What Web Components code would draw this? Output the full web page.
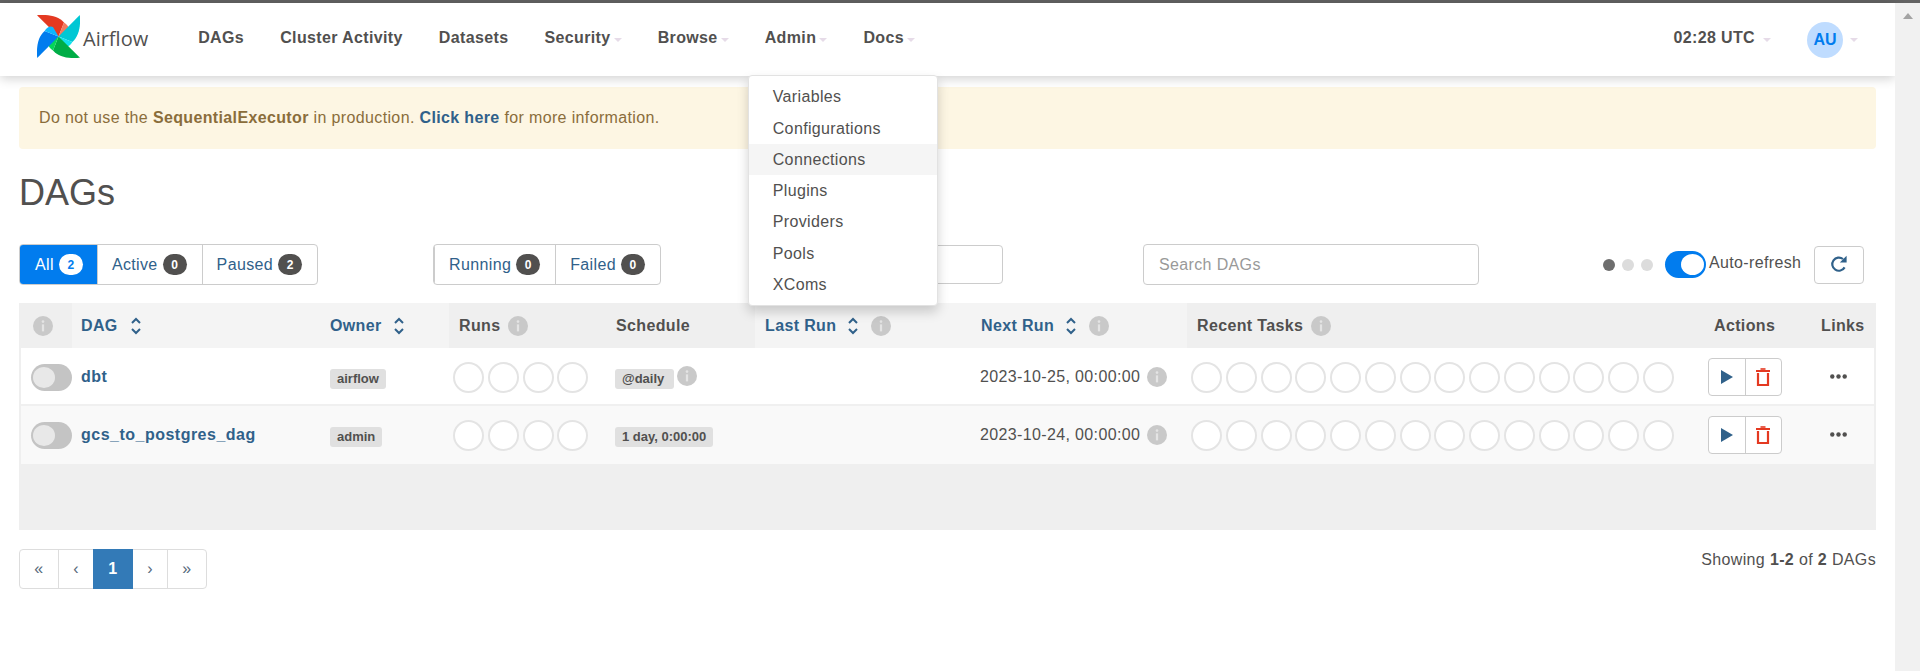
<!DOCTYPE html>
<html>
<head>
<meta charset="utf-8">
<title>DAGs - Airflow</title>
<style>
    html, body { margin: 0; height: 100%; overflow: hidden; background: #fff; }
    body { font: 16px "Liberation Sans", Arial, sans-serif; color: #51504f; letter-spacing: .36px; }
    b { font-weight: bold; }
</style>
</head>
<body>
<af-app>
    <af-navbar slot="nav">
        <af-logo slot="brand"></af-logo>
        <af-nav-item>DAGs</af-nav-item>
        <af-nav-item>Cluster Activity</af-nav-item>
        <af-nav-item>Datasets</af-nav-item>
        <af-nav-item caret>Security</af-nav-item>
        <af-nav-item caret>Browse</af-nav-item>
        <af-nav-item caret>
            Admin
            <af-menu slot="menu">
                <af-menu-item>Variables</af-menu-item>
                <af-menu-item>Configurations</af-menu-item>
                <af-menu-item hover>Connections</af-menu-item>
                <af-menu-item>Plugins</af-menu-item>
                <af-menu-item>Providers</af-menu-item>
                <af-menu-item>Pools</af-menu-item>
                <af-menu-item>XComs</af-menu-item>
            </af-menu>
        </af-nav-item>
        <af-nav-item caret>Docs</af-nav-item>
        <af-user slot="right" time="02:28 UTC" initials="AU"></af-user>
    </af-navbar>

    <af-alert>Do not use the <b>SequentialExecutor</b> in production. <a href="#" style="color:#30618a;font-weight:bold;text-decoration:none">Click here</a> for more information.</af-alert>
    <af-title>DAGs</af-title>
    <af-toolbar></af-toolbar>

    <dag-table>
        <dag-row name="dbt" owner="airflow" schedule="@daily" sched-info next="2023-10-25, 00:00:00"></dag-row>
        <dag-row name="gcs_to_postgres_dag" owner="admin" schedule="1 day, 0:00:00" next="2023-10-24, 00:00:00" odd></dag-row>
    </dag-table>

    <af-pager></af-pager>
</af-app>

<script>
const LINK = "#30618a";

class AfApp extends HTMLElement {
    constructor() {
        super();
        this.attachShadow({ mode: "open" });
        this.shadowRoot.innerHTML = `
            <style>
                :host { display: flex; flex-direction: column; height: 100vh; }
                .topline { height: 3px; background: #636363; flex: none; }
                .body { flex: 1; display: flex; min-height: 0; }
                .main { flex: 1; min-width: 0; }
                .content { padding: 0 19px; }
                .scroll { width: 25px; flex: none; background: #f1f1f1; display: flex; justify-content: center; z-index: 5; }
                .scroll i { margin-top: 10px; width: 0; height: 0; border: 5.5px solid transparent; border-top: 0; border-bottom: 6px solid #a3a3a3; }
            </style>
            <div class="topline"></div>
            <div class="body">
                <div class="main">
                    <slot name="nav"></slot>
                    <div class="content"><slot></slot></div>
                </div>
                <div class="scroll"><i></i></div>
            </div>
        `;
    }
}

class AfNavbar extends HTMLElement {
    constructor() {
        super();
        this.attachShadow({ mode: "open" });
        this.shadowRoot.innerHTML = `
            <style>
                :host {
                    display: flex; align-items: stretch; height: 73px; padding: 0 37px;
                    background: #fff; box-shadow: 0 2px 11px rgba(0,0,0,.2);
                    position: relative; z-index: 3;
                }
                .links { display: flex; gap: 36.1px; margin-left: 50px; }
                .right { margin-left: auto; display: flex; }
            </style>
            <slot name="brand"></slot>
            <div class="links"><slot></slot></div>
            <div class="right"><slot name="right"></slot></div>
        `;
    }
}

class AfLogo extends HTMLElement {
    constructor() {
        super();
        this.attachShadow({ mode: "open" });
        // one blade, turned four times round the centre
        const blade = (turn, dark, light) => `
            <g transform="rotate(${turn} 21.5 21.5)">
                <path d="M0 .2C10-.8 21 .6 27 7.6L21.5 21.5Z" fill="${dark}"/>
                <path d="M27 7.6C31 10 32.4 13 31 16L21.5 21.5Z" fill="${light}"/>
            </g>`;
        this.shadowRoot.innerHTML = `
            <style>
                :host { display: flex; align-items: center; height: 100%; letter-spacing: 0; }
                svg { display: block; margin-top: -6px; }
                span { font: 20px "Open Sans", sans-serif; color: #51504f; margin: -3px 0 0 3px; }
            </style>
            <svg width="43" height="43" viewBox="0 0 43 43">
                ${blade(0, "#e43921", "#f37a5f")}
                ${blade(90, "#00c7d4", "#11e1ee")}
                ${blade(180, "#00ad46", "#04d659")}
                ${blade(270, "#017cee", "#0cb6ff")}
            </svg>
            <span>Airflow</span>
        `;
    }
}

const CARET = `display: inline-block; width: 0; height: 0; border-left: 4px solid transparent; border-right: 4px solid transparent; border-top: 4px solid #e6dbe8;`;

class AfNavItem extends HTMLElement {
    constructor() {
        super();
        this.attachShadow({ mode: "open" });
        this.shadowRoot.innerHTML = `
            <style>
                :host { display: flex; align-items: center; height: 100%; position: relative; font-weight: bold; white-space: nowrap; padding-bottom: 3px; box-sizing: border-box; }
                .caret { ${CARET} margin: 3px 0 0 3px; }
                :host(:not([caret])) .caret { display: none; }
            </style>
            <slot></slot><span class="caret"></span><slot name="menu"></slot>
        `;
    }
}

class AfMenu extends HTMLElement {
    constructor() {
        super();
        this.attachShadow({ mode: "open" });
        this.shadowRoot.innerHTML = `
            <style>
                :host {
                    display: block; position: absolute; left: -17px; top: 72px; width: 190px; box-sizing: border-box;
                    padding: 5.4px 0 5px; background: #fff; border: 1px solid #e2e2e2; border-radius: 4px;
                    box-shadow: 0 6px 12px rgba(0,0,0,.175); font-weight: normal; z-index: 10;
                }
            </style>
            <slot></slot>
        `;
    }
}

class AfMenuItem extends HTMLElement {
    constructor() {
        super();
        this.attachShadow({ mode: "open" });
        this.shadowRoot.innerHTML = `
            <style>
                :host { display: block; height: 31.25px; line-height: 31.25px; padding-left: 24px; }
                :host([hover]) { background: #f5f5f5; }
            </style>
            <slot></slot>
        `;
    }
}

class AfUser extends HTMLElement {
    constructor() {
        super();
        this.attachShadow({ mode: "open" });
        this.shadowRoot.innerHTML = `
            <style>
                :host { display: flex; align-items: center; height: 100%; font-weight: bold; padding-bottom: 3px; box-sizing: border-box; }
                .caret { ${CARET} margin-top: 3px; }
                .time { margin-right: 8px; }
                .avatar {
                    width: 36px; height: 36px; border-radius: 50%; background: #bfdcff; color: #017cee; letter-spacing: 0;
                    display: flex; align-items: center; justify-content: center; margin: 3px 7px 0 36px;
                }
            </style>
            <span class="time">${this.getAttribute("time")}</span><span class="caret"></span>
            <span class="avatar">${this.getAttribute("initials")}</span><span class="caret"></span>
        `;
    }
}

class AfAlert extends HTMLElement {
    constructor() {
        super();
        this.attachShadow({ mode: "open" });
        this.shadowRoot.innerHTML = `
            <style>
                :host {
                    display: block; margin-top: 11px; height: 62px; line-height: 61px; padding-left: 20px; box-sizing: border-box;
                    background: #fdf6e3; border-radius: 4px; color: #8a6d3b;
                }
            </style>
            <slot></slot>
        `;
    }
}

class AfTitle extends HTMLElement {
    constructor() {
        super();
        this.attachShadow({ mode: "open" });
        this.shadowRoot.innerHTML = `
            <style>
                :host { display: block; margin-top: 24px; font-size: 36px; line-height: 40px; color: #51504f; letter-spacing: 0; }
            </style>
            <slot></slot>
        `;
    }
}

class AfCount extends HTMLElement {
    constructor() {
        super();
        this.attachShadow({ mode: "open" });
        this.shadowRoot.innerHTML = `
            <style>
                :host {
                    display: inline-flex; align-items: center; justify-content: center; width: 24px; height: 21px; border-radius: 11px;
                    background: #51504f; color: #fff; font: bold 12px "Liberation Sans", sans-serif; letter-spacing: 0;
                }
                :host([light]) { background: #fff; color: #017cee; }
            </style>
            <slot></slot>
        `;
    }
}

class AfFilterGroup extends HTMLElement {
    constructor() {
        super();
        this.attachShadow({ mode: "open" });
        const items = JSON.parse(this.getAttribute("items"));
        this.shadowRoot.innerHTML = `
            <style>
                :host { display: flex; height: 41px; box-sizing: border-box; border: 1px solid #ccc; border-radius: 4px; overflow: hidden; color: ${LINK}; }
                .it { display: flex; align-items: center; gap: 5px; padding: 0 15px 0 14px; border-left: 1px solid #ccc; }
                .it:first-child { border-left: 0; }
                .it.on { background: #017cee; color: #fff; margin: -1px 0 -1px -1px; padding: 0 14px 0 15px; }
            </style>
            ${items.map(i => `<div class="it ${i.on ? "on" : ""}">${i.label}<af-count ${i.on ? "light" : ""}>${i.n}</af-count></div>`).join("")}
        `;
    }
}

class AfSwitch extends HTMLElement {
    constructor() {
        super();
        this.attachShadow({ mode: "open" });
        this.shadowRoot.innerHTML = `
            <style>
                :host { display: block; width: 41px; height: 27px; border-radius: 14px; background: #c4c4c4; position: relative; flex: none; }
                :host([on]) { background: #017cee; }
                i { position: absolute; left: 2px; top: 3px; width: 22px; height: 21px; border-radius: 50%; background: #e8e8e8; }
                :host([on]) i { left: 16px; background: #fff; width: 23px; }
            </style>
            <i></i>
        `;
    }
}

class AfInfo extends HTMLElement {
    constructor() {
        super();
        this.attachShadow({ mode: "open" });
        this.shadowRoot.innerHTML = `
            <style>
                :host { display: block; width: 20px; height: 20px; flex: none; }
                svg { display: block; }
            </style>
            <svg width="20" height="20" viewBox="0 0 20 20">
                <circle cx="10" cy="10" r="10" fill="#c9c9c9"/>
                <circle cx="10" cy="5.6" r="1.3" fill="#e4e4e4"/>
                <rect x="8.9" y="8.4" width="2.2" height="7" fill="#e4e4e4"/>
            </svg>
        `;
    }
}

class AfSort extends HTMLElement {
    constructor() {
        super();
        this.attachShadow({ mode: "open" });
        this.shadowRoot.innerHTML = `
            <style>
                :host { display: block; width: 10px; height: 18px; flex: none; }
                svg { display: block; }
            </style>
            <svg width="10" height="18" viewBox="0 0 10 18" fill="none" stroke="${LINK}" stroke-width="2">
                <path d="M1 6l4-4 4 4"/>
                <path d="M1 12l4 4 4-4"/>
            </svg>
        `;
    }
}

class AfToolbar extends HTMLElement {
    constructor() {
        super();
        this.attachShadow({ mode: "open" });
        this.shadowRoot.innerHTML = `
            <style>
                :host { display: flex; align-items: center; margin-top: 31px; height: 41px; padding-right: 12px; }
                .box { box-sizing: border-box; border: 1px solid #ccc; border-radius: 4px; background: #fff; }
                .tags { width: 243px; height: 39px; margin-left: auto; }
                .search { width: 336px; height: 41px; margin-left: 140px; padding-left: 15px; display: flex; align-items: center; color: #999; }
                .dots { display: flex; gap: 7px; margin-left: 124px; }
                .dots i { width: 12px; height: 12px; border-radius: 50%; background: #dcdcdc; }
                .dots i:first-child { background: #6e6e6e; }
                af-switch { margin-left: 12px; }
                .lbl { margin-left: 3px; margin-top: -3px; width: 93px; white-space: nowrap; }
                .refresh { width: 50px; height: 38px; margin-left: 12px; display: flex; align-items: center; justify-content: center; }
                svg { display: block; margin-top: -1px; }
            </style>
            <af-filter-group items='[{"label":"All","n":2,"on":true},{"label":"Active","n":0},{"label":"Paused","n":2}]'></af-filter-group>
            <af-filter-group style="margin-left:115px" items='[{"label":"Running","n":0},{"label":"Failed","n":0}]'></af-filter-group>
            <div class="box tags"></div>
            <div class="box search">Search DAGs</div>
            <div class="dots"><i></i><i></i><i></i></div>
            <af-switch on></af-switch>
            <span class="lbl">Auto-refresh</span>
            <div class="box refresh">
                <svg width="18" height="18" viewBox="0 0 18 18">
                    <path d="M14.6 12.4A6.6 6.6 0 1 1 13 4" fill="none" stroke="${LINK}" stroke-width="2.2"/>
                    <path d="M16.6 .8V7.6H9.8Z" fill="${LINK}"/>
                </svg>
            </div>
        `;
    }
}

const COLS = "53px 248px 129px 157px 149px 216px 216px 517px 107px 65px";

class DagTable extends HTMLElement {
    constructor() {
        super();
        this.attachShadow({ mode: "open" });
        const sortable = (label, info) => `<div class="th lite link">${label}<af-sort style="margin-left:12px"></af-sort>${info ? `<af-info style="margin-left:13px"></af-info>` : ""}</div>`;
        this.shadowRoot.innerHTML = `
            <style>
                :host { display: block; margin-top: 18px; height: 227px; background: #efefef; }
                .head { display: grid; grid-template-columns: ${COLS}; height: 45px; font-weight: bold; }
                .th { display: flex; align-items: center; padding-left: 10px; background: #efefef; white-space: nowrap; }
                .th.lite { background: #f4f4f4; }
                .th.link { color: ${LINK}; }
                .th af-info.plain { margin-left: 8px; }
                .th.first { padding-left: 14px; }
                .th.dag { padding-left: 9px; }
                .rows { padding: 0 2px; }
            </style>
            <div class="head">
                <div class="th first"><af-info></af-info></div>
                <div class="th lite link dag">DAG<af-sort style="margin-left:13px"></af-sort></div>
                ${sortable("Owner")}
                <div class="th">Runs<af-info class="plain"></af-info></div>
                <div class="th">Schedule</div>
                ${sortable("Last Run", true)}
                ${sortable("Next Run", true)}
                <div class="th">Recent Tasks<af-info class="plain"></af-info></div>
                <div class="th">Actions</div>
                <div class="th">Links</div>
            </div>
            <div class="rows"><slot></slot></div>
        `;
    }
}

class DagRow extends HTMLElement {
    constructor() {
        super();
        this.attachShadow({ mode: "open" });
        const attr = n => this.getAttribute(n);
        const circles = n => `<div class="circles">${"<i></i>".repeat(n)}</div>`;
        const hasInfo = this.hasAttribute("sched-info");
        this.shadowRoot.innerHTML = `
            <style>
                :host {
                    display: grid; grid-template-columns: 51px 248px 129px 157px 149px 216px 216px 517px 107px 63px;
                    height: 58px; align-items: center;
                    background: #fff; box-shadow: inset 0 -2px #f0f0f0;
                }
                :host([odd]) { background: #f9f9f9; box-shadow: none; }
                .c { display: flex; align-items: center; padding-left: 9px; white-space: nowrap; }
                .c.toggle { padding-left: 10px; }
                .c.wide { padding-left: 4px; }
                .name { color: ${LINK}; font-weight: bold; margin-top: -1px; letter-spacing: .49px; }
                .label {
                    display: inline-block; height: 20px; line-height: 20px; padding: 0 7px; margin-top: 4px;
                    background: #e0e0e0; border-radius: 3px; font-size: 13px; font-weight: bold; letter-spacing: 0;
                }
                .circles { display: flex; gap: 3.75px; }
                .circles i { width: 31px; height: 31px; box-sizing: border-box; border: 2px solid #e4e4e4; border-radius: 50%; background: #fff; }
                .next { gap: 7px; }
                .acts { display: flex; width: 74px; height: 38px; box-sizing: border-box; border: 1px solid #ccc; border-radius: 4px; background: #fff; }
                .acts div { flex: 1; display: flex; align-items: center; justify-content: center; }
                .acts div + div { border-left: 1px solid #ccc; }
                svg { display: block; }
                .dots { padding-left: 19px; }
            </style>
            <div class="c toggle"><af-switch></af-switch></div>
            <div class="c"><span class="name">${attr("name")}</span></div>
            <div class="c" style="padding-left:10px"><span class="label">${attr("owner")}</span></div>
            <div class="c wide">${circles(4)}</div>
            <div class="c"><span class="label" ${hasInfo ? `style="padding-right:10px"` : ""}>${attr("schedule")}</span>${hasInfo ? `<af-info style="margin:-2px 0 0 3px"></af-info>` : ""}</div>
            <div class="c"></div>
            <div class="c next">${attr("next")}<af-info></af-info></div>
            <div class="c wide">${circles(14)}</div>
            <div class="c wide">
                <div class="acts">
                    <div><svg width="12" height="14" viewBox="0 0 12 14"><path d="M0 0L12 7L0 14Z" fill="${LINK}"/></svg></div>
                    <div><svg width="14" height="18" viewBox="0 0 14 18" fill="none" stroke="#e43921" stroke-width="2">
                        <path d="M0 3H14"/><path d="M4.5 1H9.5" stroke-width="1.6"/><path d="M2 5V17H12V5" stroke-width="2.2"/>
                    </svg></div>
                </div>
            </div>
            <div class="c dots">
                <svg width="17" height="5" viewBox="0 0 17 5" style="margin-top:-2px" fill="#51504f"><circle cx="2.3" cy="2.5" r="2.2"/><circle cx="8.5" cy="2.5" r="2.2"/><circle cx="14.7" cy="2.5" r="2.2"/></svg>
            </div>
        `;
    }
}

class AfPager extends HTMLElement {
    constructor() {
        super();
        this.attachShadow({ mode: "open" });
        const pages = [["«", 38], ["‹", 35], ["1", 40, true], ["›", 34], ["»", 39]];
        this.shadowRoot.innerHTML = `
            <style>
                :host { display: flex; justify-content: space-between; margin-top: 19px; }
                .pager { display: flex; height: 40px; box-sizing: border-box; border: 1px solid #ddd; border-radius: 4px; }
                .pager div { display: flex; align-items: center; justify-content: center; box-sizing: border-box; color: #55687a; border-left: 1px solid #ddd; }
                .pager div:first-child { border-left: 0; }
                .pager div.on { background: #337ab7; color: #fff; margin: -1px 0; border: 0; height: 40px; font-weight: bold; }
                .pager div.on + div { border-left: 0; }
                .showing { line-height: 22px; }
            </style>
            <div class="pager">${pages.map(p => `<div class="${p[2] ? "on" : ""}" style="width:${p[1]}px">${p[0]}</div>`).join("")}</div>
            <div class="showing">Showing <b>1-2</b> of <b>2</b> DAGs</div>
        `;
    }
}

customElements.define("af-app", AfApp);
customElements.define("af-navbar", AfNavbar);
customElements.define("af-logo", AfLogo);
customElements.define("af-nav-item", AfNavItem);
customElements.define("af-menu", AfMenu);
customElements.define("af-menu-item", AfMenuItem);
customElements.define("af-user", AfUser);
customElements.define("af-alert", AfAlert);
customElements.define("af-title", AfTitle);
customElements.define("af-count", AfCount);
customElements.define("af-filter-group", AfFilterGroup);
customElements.define("af-switch", AfSwitch);
customElements.define("af-info", AfInfo);
customElements.define("af-sort", AfSort);
customElements.define("af-toolbar", AfToolbar);
customElements.define("dag-table", DagTable);
customElements.define("dag-row", DagRow);
customElements.define("af-pager", AfPager);
</script>
</body>
</html>
